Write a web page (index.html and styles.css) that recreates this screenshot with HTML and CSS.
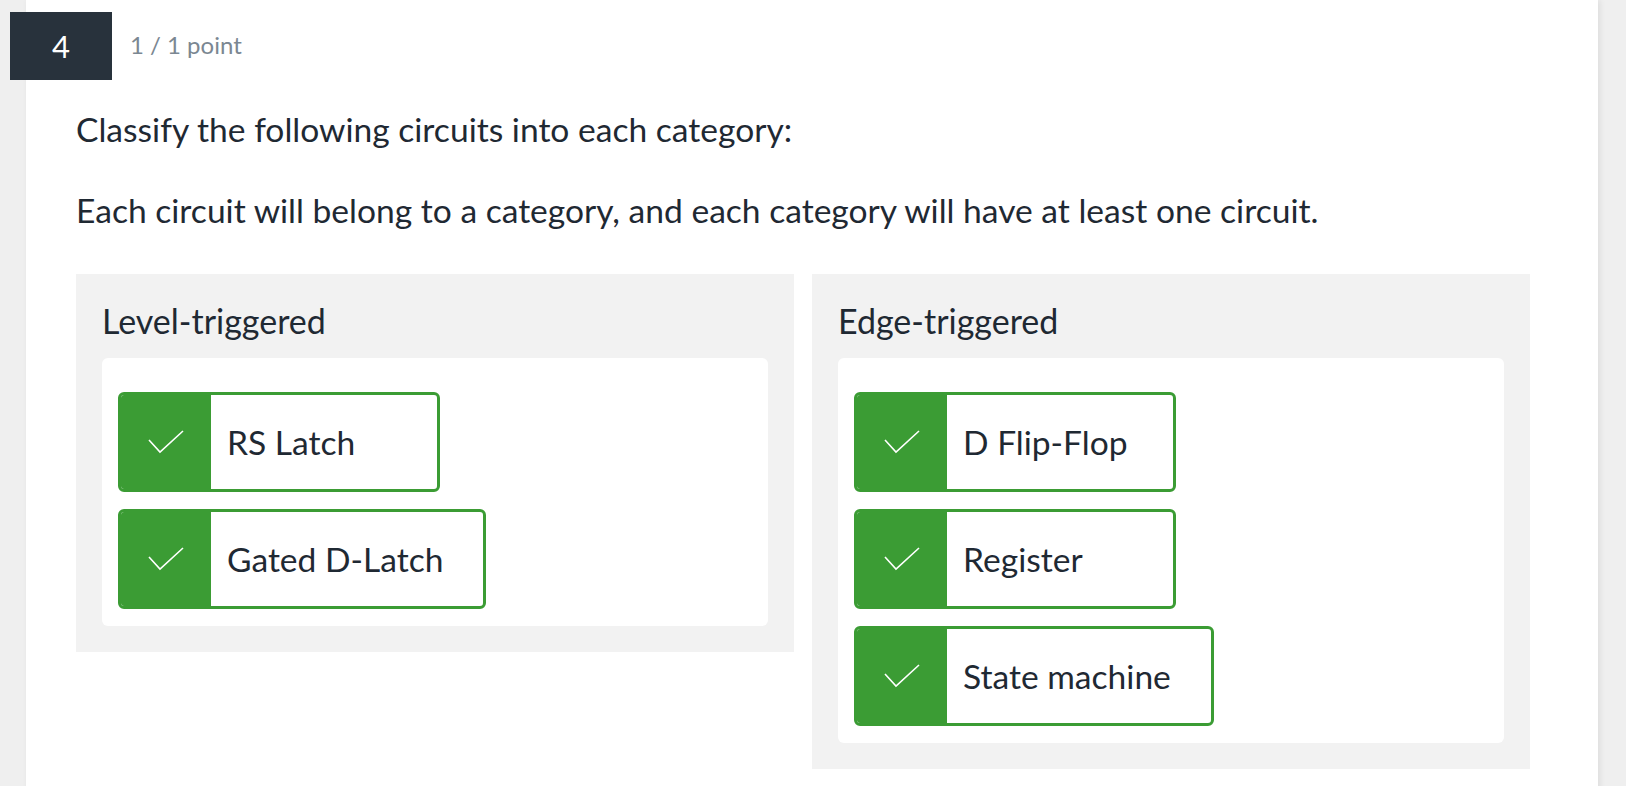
FILE: index.html
```html
<!DOCTYPE html>
<html lang="en">
<head>
<meta charset="utf-8">
<title>Question 4</title>
<link rel="stylesheet" href="styles.css">
</head>
<body>
<div class="page">
  <div class="card">
    <div class="q-header">
      <div class="q-number">4</div>
      <div class="q-points">1 / 1 point</div>
    </div>
    <div class="q-body">
      <p class="q-text first">Classify the following circuits into each category:</p>
      <p class="q-text">Each circuit will belong to a category, and each category will have at least one circuit.</p>
      <div class="categories">
        <div class="category">
          <h3 class="cat-title">Level-triggered</h3>
          <div class="drop-zone">
            <div class="item"><span class="check"><svg width="36" height="24" viewBox="0 0 36 24"><polyline points="1,10 12,22 35,1" fill="none" stroke="#fff" stroke-width="1.6"/></svg></span><span class="label">RS Latch</span></div>
            <div class="item"><span class="check"><svg width="36" height="24" viewBox="0 0 36 24"><polyline points="1,10 12,22 35,1" fill="none" stroke="#fff" stroke-width="1.6"/></svg></span><span class="label">Gated D-Latch</span></div>
          </div>
        </div>
        <div class="category">
          <h3 class="cat-title">Edge-triggered</h3>
          <div class="drop-zone">
            <div class="item"><span class="check"><svg width="36" height="24" viewBox="0 0 36 24"><polyline points="1,10 12,22 35,1" fill="none" stroke="#fff" stroke-width="1.6"/></svg></span><span class="label">D Flip-Flop</span></div>
            <div class="item"><span class="check"><svg width="36" height="24" viewBox="0 0 36 24"><polyline points="1,10 12,22 35,1" fill="none" stroke="#fff" stroke-width="1.6"/></svg></span><span class="label">Register</span></div>
            <div class="item"><span class="check"><svg width="36" height="24" viewBox="0 0 36 24"><polyline points="1,10 12,22 35,1" fill="none" stroke="#fff" stroke-width="1.6"/></svg></span><span class="label">State machine</span></div>
          </div>
        </div>
      </div>
    </div>
  </div>
</div>
</body>
</html>
```

FILE: styles.css
```css
html, body {
  margin: 0;
  padding: 0;
  height: 100%;
  overflow: hidden;
}
body {
  background: #efefef;
  font-family: Lato, "Open Sans", Arial, sans-serif;
  color: #1f2933;
}
.page {
  padding: 0 28px 0 26px;
  height: 100%;
}
.card {
  background: #fff;
  min-height: 100%;
  padding: 12px 68px 40px 0;
  box-sizing: border-box;
  box-shadow: 2px 0 6px rgba(0,0,0,0.08);
}
.q-header {
  display: flex;
  align-items: center;
  gap: 18px;
  margin-left: -16px;
}
.q-number {
  width: 102px;
  height: 68px;
  background: #28323c;
  color: #fff;
  font-size: 31px;
  display: flex;
  align-items: center;
  justify-content: center;
}
.q-points {
  font-size: 24px;
  color: #7b8792;
  margin-top: -3px;
}
.q-body {
  padding-left: 50px;
}
.q-text {
  font-size: 33.6px;
  line-height: 40px;
  margin: 41px 0 0;
}
.q-text.first {
  margin-top: 29px;
}
.categories {
  display: grid;
  grid-template-columns: 1fr 1fr;
  gap: 18px;
  align-items: start;
  margin-top: 44px;
}
.category {
  background: #f2f2f2;
  padding: 26px;
}
.cat-title {
  font-size: 34px;
  font-weight: 400;
  line-height: 36px;
  margin: 3px 0 19px;
}
.drop-zone {
  background: #fff;
  border-radius: 6px;
  padding: 34px 16px 17px;
  display: flex;
  flex-direction: column;
  align-items: flex-start;
  gap: 17px;
}
.item {
  display: flex;
  align-items: stretch;
  height: 100px;
  min-width: 322px;
  box-sizing: border-box;
  border: 3px solid #3b9c34;
  border-radius: 6px;
  background: #fff;
  overflow: hidden;
}
.check {
  width: 93px;
  flex: none;
  margin: -3px 0 -3px -3px;
  background: #3b9c34;
  display: flex;
  align-items: center;
  justify-content: center;
}
.check svg { display: block; margin-left: 3px; }
.label {
  display: flex;
  align-items: center;
  font-size: 33.6px;
  padding: 0 40px 0 16px;
}
```
